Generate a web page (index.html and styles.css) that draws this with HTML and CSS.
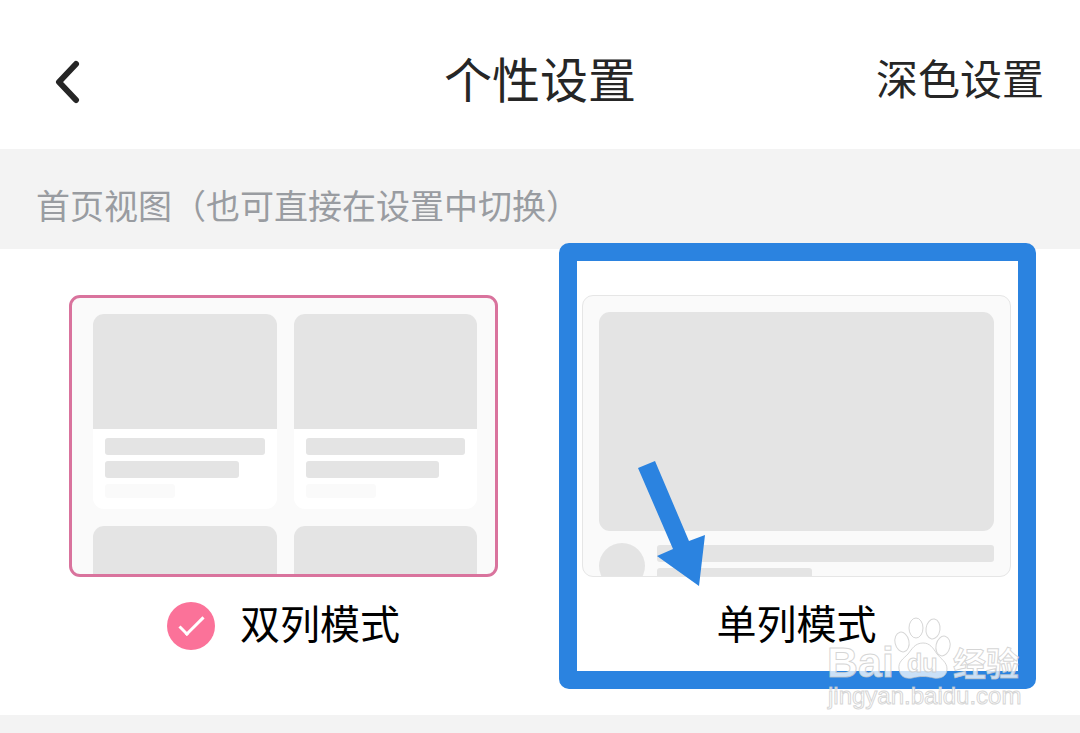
FILE: index.html
```html
<!DOCTYPE html>
<html lang="zh-CN">

<head>
  <meta charset="UTF-8" />
  <meta name="viewport" content="width=device-width, initial-scale=1.0" />
  <title>个性设置</title>
  <link rel="stylesheet" href="styles.css">
</head>

<body>
  <header class="navbar">
    <a class="back" href="#" aria-label="返回">
      <svg width="30" height="44" viewBox="0 0 30 44" fill="none" stroke="#262626" stroke-width="6" stroke-linecap="round" stroke-linejoin="round">
        <path d="M22 4 L5 22 L22 40" />
      </svg>
    </a>
    <h1>个性设置</h1>
    <a class="dark-link" href="#">深色设置</a>
  </header>

  <main>
    <h2 class="section-title" id="viewTitle">首页视图（也可直接在设置中切换）</h2>

    <form class="options" role="radiogroup" aria-labelledby="viewTitle">
      <label class="option">
        <span class="preview preview-double">
          <span class="card">
            <span class="thumb"></span>
            <span class="lines"><span class="bar"></span><span class="bar medium"></span><span class="bar faint"></span></span>
          </span>
          <span class="card">
            <span class="thumb"></span>
            <span class="lines"><span class="bar"></span><span class="bar medium"></span><span class="bar faint"></span></span>
          </span>
          <span class="card"><span class="thumb"></span></span>
          <span class="card"><span class="thumb"></span></span>
        </span>
        <span class="choice">
          <input type="radio" name="view" value="double" checked />
          <span class="choice-text">双列模式</span>
        </span>
      </label>

      <label class="option">
        <span class="preview preview-single">
          <span class="cover"></span>
          <span class="author">
            <span class="avatar"></span>
            <span class="lines"><span class="bar"></span><span class="bar short"></span></span>
          </span>
        </span>
        <span class="choice">
          <input type="radio" name="view" value="single" />
          <span class="choice-text">单列模式</span>
        </span>

        <!-- Highlight box and arrow over the option -->
        <span class="highlight"></span>
        <svg class="arrow" width="70" height="128" viewBox="0 0 70 128" fill="#2b83e0">
          <path d="M0 7 L17 0 L51 80 L67 74 L61 125 L19 95 L35 88 Z" />
        </svg>
      </label>

      <svg class="watermark" width="204" height="104" viewBox="0 0 204 104" role="img" aria-label="Baidu 经验">
        <g class="mark">
          <ellipse cx="80" cy="33" rx="7" ry="10" transform="rotate(-12 80 33)" />
          <ellipse cx="94" cy="19" rx="7" ry="10" />
          <ellipse cx="111" cy="20" rx="7" ry="10" transform="rotate(8 111 20)" />
          <ellipse cx="121" cy="37" rx="7" ry="10" transform="rotate(12 121 37)" />
          <path d="M101 34 C93 34 90 40 86 45 C81 50 76 53 77 60 C78 68 84 70 90 69 C97 67 105 67 112 69 C119 70 125 67 125 60 C125 53 119 50 115 45 C111 39 108 34 101 34 Z" />
          <text class="logo" x="5" y="68">Bai</text>
          <text class="logo-du" x="85" y="63">du</text>
          <text class="logo-cn" x="131" y="67">经验</text>
          <text class="site" x="6" y="95">jingyan.baidu.com</text>
        </g>
      </svg>
    </form>
  </main>
</body>

</html>
```

FILE: styles.css
```css
body {
  font-family: "Noto Sans CJK SC", "Noto Sans", sans-serif;
  margin: 0;
  background-color: #f3f3f3;
  color: #262626;
}

.navbar {
  display: grid;
  grid-template-columns: 1fr auto 1fr;
  align-items: center;
  height: 149px;
  padding: 14px 36px 0;
  box-sizing: border-box;
  background-color: #fff;
}

.navbar a {
  color: inherit;
  text-decoration: none;
}

.navbar h1 {
  margin: 0;
  padding-bottom: 10px;
  font-size: 48px;
  font-weight: 400;
  line-height: 64px;
}

.back {
  justify-self: start;
  display: flex;
  padding: 0 18px;
}

.dark-link {
  justify-self: end;
  padding-bottom: 10px;
  font-size: 42px;
  line-height: 64px;
}

.section-title {
  margin: 0;
  padding: 32px 36px 20px;
  font-size: 34px;
  font-weight: 400;
  line-height: 48px;
  color: #999ca1;
}

/* View options */
.options {
  position: relative;
  display: grid;
  grid-template-columns: 1fr 1fr;
  gap: 84px;
  padding: 46px 69px 65px;
  background-color: #fff;
}

.option {
  position: relative;
  display: block;
  cursor: pointer;
}

.preview {
  display: block;
  height: 282px;
  box-sizing: border-box;
  overflow: hidden;
  border-radius: 11px;
  background-color: #fafafa;
}

.preview-double {
  display: grid;
  grid-template-columns: 1fr 1fr;
  grid-template-rows: 195px 195px;
  gap: 17px;
  padding: 16px 18px 0 21px;
  border: 3px solid #d9739d;
}

.card {
  overflow: hidden;
  border-radius: 11px;
  background-color: #fff;
}

.thumb {
  display: block;
  height: 115px;
  background-color: #e4e4e4;
}

.lines {
  display: flex;
  flex-direction: column;
  gap: 6px;
}

.card .lines {
  padding: 9px 12px;
}

.bar {
  height: 17px;
  border-radius: 3px;
  background-color: #e4e4e4;
}

.bar.medium {
  width: 84%;
}

.bar.short {
  width: 46%;
}

.bar.faint {
  width: 44%;
  height: 14px;
  background-color: #fafafa;
}

.preview-single {
  padding: 16px;
  border: 1px solid #e6e6e6;
}

.cover {
  display: block;
  height: 219px;
  border-radius: 11px;
  background-color: #e4e4e4;
}

.author {
  display: flex;
  gap: 12px;
  margin-top: 12px;
}

.avatar {
  width: 46px;
  height: 46px;
  border-radius: 50%;
  background-color: #e4e4e4;
}

.author .lines {
  flex: 1;
  padding-top: 2px;
}

.choice {
  display: flex;
  justify-content: center;
  align-items: center;
  gap: 25px;
  margin-top: 25px;
  color: #000;
}

.choice-text {
  padding-bottom: 8px;
  font-size: 40px;
  line-height: 40px;
}

.choice input {
  appearance: none;
  width: 48px;
  height: 48px;
  margin: 0;
  border-radius: 50%;
}

.choice input:checked {
  display: grid;
  place-items: center;
  background-color: #fb7299;
}

/* Tick inside the selected radio */
.choice input:checked::after {
  content: "";
  width: 25px;
  height: 12px;
  margin-bottom: 7px;
  border-left: 3px solid #fff;
  border-bottom: 3px solid #fff;
  box-sizing: border-box;
  transform: rotate(-45deg);
}

.choice input:not(:checked) {
  position: absolute;
  opacity: 0;
}

.highlight {
  position: absolute;
  top: -52px;
  bottom: -39px;
  left: -23px;
  right: -25px;
  border: 18px solid #2b83e0;
  border-radius: 10px;
  box-sizing: border-box;
  pointer-events: none;
}

.arrow {
  position: absolute;
  top: 166px;
  left: 56px;
  pointer-events: none;
}

.watermark {
  position: absolute;
  right: 54px;
  bottom: 2px;
  pointer-events: none;
}

.mark {
  fill: rgba(255, 255, 255, 0.75);
  stroke: rgba(200, 200, 200, 0.75);
  stroke-width: 1;
}

.logo,
.logo-du,
.site {
  font-family: "Liberation Sans", Arial, sans-serif;
}

.logo {
  font-size: 43px;
  font-weight: 700;
}

.logo-du {
  font-size: 25px;
  font-weight: 700;
}

.logo-cn {
  font-size: 33px;
  font-weight: 700;
}

.site {
  font-size: 24px;
}
```
